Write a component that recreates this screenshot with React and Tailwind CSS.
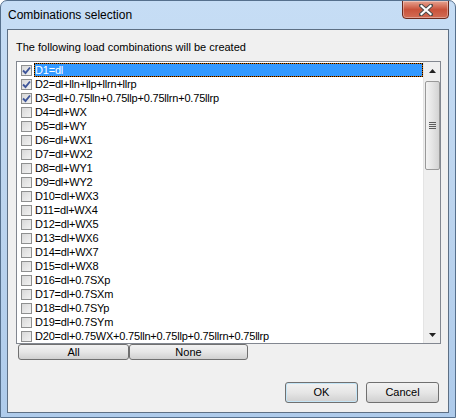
import React from "react";

const items = [
  "D1=dl",
  "D2=dl+lln+llp+llrn+llrp",
  "D3=dl+0.75lln+0.75llp+0.75llrn+0.75llrp",
  "D4=dl+WX",
  "D5=dl+WY",
  "D6=dl+WX1",
  "D7=dl+WX2",
  "D8=dl+WY1",
  "D9=dl+WY2",
  "D10=dl+WX3",
  "D11=dl+WX4",
  "D12=dl+WX5",
  "D13=dl+WX6",
  "D14=dl+WX7",
  "D15=dl+WX8",
  "D16=dl+0.7SXp",
  "D17=dl+0.7SXm",
  "D18=dl+0.7SYp",
  "D19=dl+0.7SYm",
  "D20=dl+0.75WX+0.75lln+0.75llp+0.75llrn+0.75llrp",
];

function CheckBox({ checked }) {
  return (
    <div className="w-[11px] h-[11px] border border-[#8e8f8f] bg-gradient-to-br from-[#d8d8d8] to-[#f2f2f2] shrink-0 flex items-center justify-center">
      {checked && (
        <svg width="9" height="9" viewBox="0 0 9 9">
          <path d="M1 4.5 L3.5 7 L8 1.5" stroke="#3f569a" strokeWidth="1.9" fill="none" />
        </svg>
      )}
    </div>
  );
}

function Row({ text, checked, selected }) {
  return (
    <div className="h-[14px] flex items-center">
      <div className="w-[4px]" />
      <CheckBox checked={checked} />
      <div className="w-[2px]" />
      {selected ? (
        <div className="flex-1 h-[14px] bg-[#cc6600]">
          <div className="h-full border border-dotted border-black bg-[#3399ff] bg-clip-padding text-white leading-[12px] tracking-[-0.2px]">
            {text}
          </div>
        </div>
      ) : (
        <div className="flex-1 pl-[1px] leading-[14px] text-black tracking-[-0.2px]">{text}</div>
      )}
    </div>
  );
}

function WinButton({ children, className = "" }) {
  return (
    <div
      className={
        "flex items-center justify-center border border-[#707070] rounded-[3px] bg-gradient-to-b from-[#f2f2f2] via-[#e6e6e6] to-[#d0d0d0] text-black " +
        className
      }
    >
      {children}
    </div>
  );
}

export default function App() {
  return (
    <div
      className="w-[456px] h-[418px] relative overflow-hidden rounded-t-[7px] border border-[#56708d] bg-gradient-to-b from-[#c6ddf5] via-[#bcd4ee] to-[#aecbeb] flex flex-col"
      style={{ fontFamily: '"Liberation Sans", Arial, sans-serif' }}
    >
      {/* Title bar */}
      <div className="h-[28px] flex items-start shrink-0">
        <div className="pl-[7px] pt-[7px] text-[12px] leading-[15px] text-black">Combinations selection</div>
        <div className="flex-1" />
        <div className="mr-[6px] w-[47px] h-[19px] -mt-[1px] rounded-b-[4px] border border-[#6b2a1e] bg-gradient-to-b from-[#e6a391] via-[#c9523b] to-[#d26c55] flex items-center justify-center shadow-[inset_0_0_0_1px_rgba(255,255,255,0.35)]">
          <svg width="14" height="12" viewBox="0 0 14 12">
            <path d="M2 1.5 L12 10.5 M12 1.5 L2 10.5" stroke="#4a4a4a" strokeWidth="4" strokeLinecap="square" />
            <path d="M2.5 2 L11.5 10 M11.5 2 L2.5 10" stroke="#ffffff" strokeWidth="2.2" strokeLinecap="square" />
          </svg>
        </div>
      </div>

      {/* Client area */}
      <div className="mx-[6px] h-[384px] border border-[#5d6f84] bg-[#f0f0f0] flex flex-col text-[11px]">
        <div className="ml-[8px] mt-[10px] h-[14px] leading-[14px] text-black">
          The following load combinations will be created
        </div>

        <div className="ml-[8px] mt-[7px] w-[425px] h-[283px] border border-[#828790] bg-white flex">
          <div className="flex-1 pt-[1px] flex flex-col overflow-hidden whitespace-nowrap">
            {items.map((t, i) => (
              <Row key={t} text={t} checked={i < 3} selected={i === 0} />
            ))}
          </div>
          {/* Scrollbar */}
          <div className="w-[17px] h-full bg-[#efefef] border-l border-[#e4e4e4] flex flex-col items-center">
            <div className="h-[17px] w-full flex items-center justify-center">
              <svg width="7" height="4" viewBox="0 0 7 4">
                <path d="M3.5 0 L7 4 L0 4 Z" fill="#222" />
              </svg>
            </div>
            <div className="mt-[2px] w-[15px] h-[89px] rounded-[2px] border border-[#999] bg-gradient-to-r from-[#f3f3f3] via-[#e4e4e4] to-[#d3d3d3] flex flex-col items-center justify-center gap-[1px]">
              <div className="w-[7px] h-[1px] bg-[#5c5c5c]" />
              <div className="w-[7px] h-[1px] bg-[#5c5c5c]" />
              <div className="w-[7px] h-[1px] bg-[#5c5c5c]" />
              <div className="w-[7px] h-[1px] bg-[#5c5c5c]" />
            </div>
            <div className="flex-1" />
            <div className="h-[17px] w-full flex items-center justify-center">
              <svg width="7" height="4" viewBox="0 0 7 4">
                <path d="M0 0 L7 0 L3.5 4 Z" fill="#222" />
              </svg>
            </div>
          </div>
        </div>

        <div className="ml-[10px] flex">
          <WinButton className="w-[111px] h-[16px] rounded-[2px]">All</WinButton>
          <WinButton className="w-[119px] h-[16px] rounded-[2px]">None</WinButton>
        </div>

        <div className="mt-[22px] flex justify-end pr-[9px] gap-[8px]">
          <WinButton className="w-[73px] h-[21px] border-[#3c7fb1] from-[#eaf6fd] via-[#d9f0fc] to-[#a7d9f5] shadow-[inset_0_0_0_1px_#c4e5f6]">
            OK
          </WinButton>
          <WinButton className="w-[73px] h-[21px]">Cancel</WinButton>
        </div>
      </div>
    </div>
  );
}
